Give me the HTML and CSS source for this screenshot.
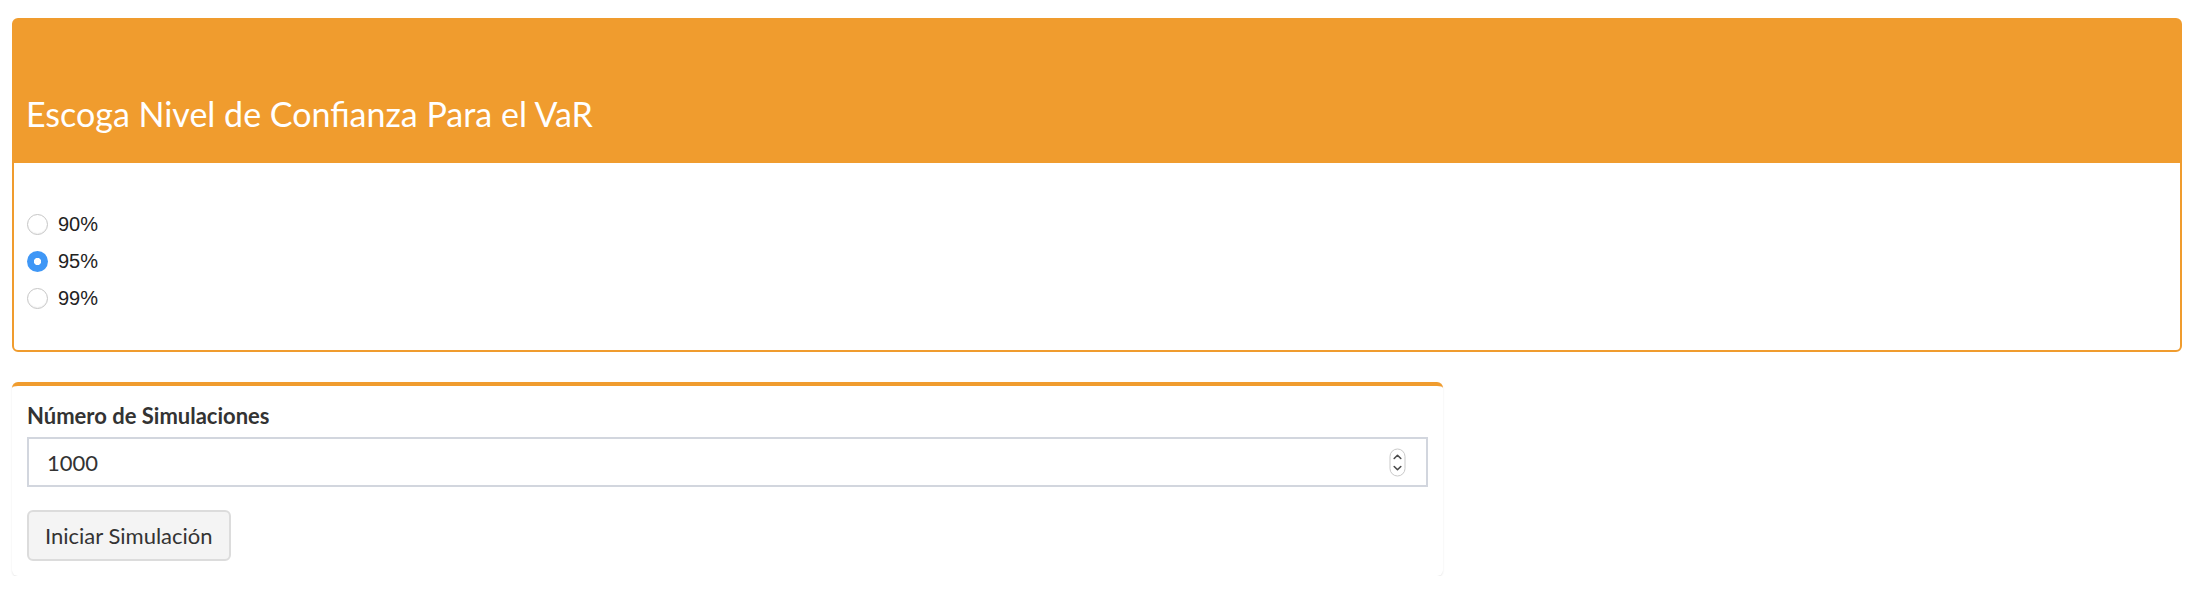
FILE: index.html
```html
<!DOCTYPE html>
<html lang="es">
<head>
<meta charset="utf-8">
<title>VaR</title>
<link rel="stylesheet" href="styles.css">
</head>
<body>
<div class="page">
  <section class="box box-solid">
    <header class="box-header">
      <h3 class="box-title">Escoga Nivel de Confianza Para el VaR</h3>
    </header>
    <div class="box-body">
      <div class="radio-group">
        <label class="radio-row"><span class="radio"></span><span class="radio-text">90%</span></label>
        <label class="radio-row"><span class="radio checked"></span><span class="radio-text">95%</span></label>
        <label class="radio-row"><span class="radio"></span><span class="radio-text">99%</span></label>
      </div>
    </div>
  </section>

  <section class="box box-top">
    <div class="box-body2">
      <label class="field-label">Número de Simulaciones</label>
      <div class="num-input">
        <span class="num-value">1000</span>
        <svg class="spinner" width="17" height="29" viewBox="0 0 17 29">
          <rect x="1" y="1" width="15" height="27" rx="7.5" fill="#fff" stroke="#c9c9c9" stroke-width="1"/>
          <path d="M5.2 10.5 L8.5 7.3 L11.8 10.5" fill="none" stroke="#4a4a4a" stroke-width="1.6" stroke-linecap="round" stroke-linejoin="round"/>
          <path d="M5.2 18.5 L8.5 21.7 L11.8 18.5" fill="none" stroke="#4a4a4a" stroke-width="1.6" stroke-linecap="round" stroke-linejoin="round"/>
        </svg>
      </div>
      <button class="btn" type="button">Iniciar Simulación</button>
    </div>
  </section>
</div>
</body>
</html>
```
FILE: styles.css
```css
html, body {
  margin: 0;
  padding: 0;
  background: #ffffff;
}

.page {
  padding: 18px 18px 0 12px;
  font-family: Lato, "Open Sans", sans-serif;
  color: #333;
}

.box {
  box-sizing: border-box;
  border-radius: 6px;
  background: #fff;
}

.box-solid {
  width: 2170px;
  border: 2px solid #f09c2e;
}

.box-header {
  background: #f09c2e;
  padding: 74px 12px 26px 12px;
  height: 143px;
  box-sizing: border-box;
}

.box-title {
  margin: 0;
  font-family: Lato, sans-serif;
  font-weight: 400;
  font-size: 34px;
  line-height: 40px;
  color: #fff;
}

.box-body {
  padding: 43px 13px 33px 13px;
}

.radio-group {
  display: flex;
  flex-direction: column;
}

.radio-row {
  display: flex;
  align-items: center;
  gap: 10px;
  height: 37px;
  font-family: "Liberation Sans", Arial, sans-serif;
  font-size: 20px;
  color: #222;
}

.radio {
  box-sizing: border-box;
  width: 21px;
  height: 21px;
  border-radius: 50%;
  border: 1px solid #c6c6c6;
  background: #ffffff;
  box-shadow: inset 0 -1px 1px rgba(0,0,0,0.05);
}

.radio.checked {
  border: none;
  background: radial-gradient(circle, #ffffff 0, #ffffff 3.2px, #3f97f6 4px);
  box-shadow: none;
}

.box-top {
  margin-top: 30px;
  width: 1431px;
  border-top: 4px solid #f09c2e;
  box-shadow: 0 1px 2px rgba(0,0,0,0.1);
}

.box-body2 {
  display: flex;
  flex-direction: column;
  align-items: flex-start;
  padding: 15px 15px 15px 15px;
}

.field-label {
  font-weight: 700;
  font-size: 22px;
  line-height: 30px;
  color: #333;
  margin-bottom: 6px;
}

.num-input {
  box-sizing: border-box;
  width: 1401px;
  height: 50px;
  border: 2px solid #d2d6de;
  display: flex;
  align-items: center;
  justify-content: space-between;
  padding: 0 20px 0 18px;
}

.num-value {
  font-size: 22px;
  color: #333;
}

.spinner {
  display: block;
}

.btn {
  margin-top: 23px;
  box-sizing: border-box;
  height: 51px;
  width: 204px;
  border: 2px solid #dcdcdc;
  border-radius: 6px;
  background: #f4f4f4;
  font-family: Lato, "Open Sans", sans-serif;
  font-size: 22px;
  color: #333;
  padding: 0 16px;
  text-align: left;
}
```
